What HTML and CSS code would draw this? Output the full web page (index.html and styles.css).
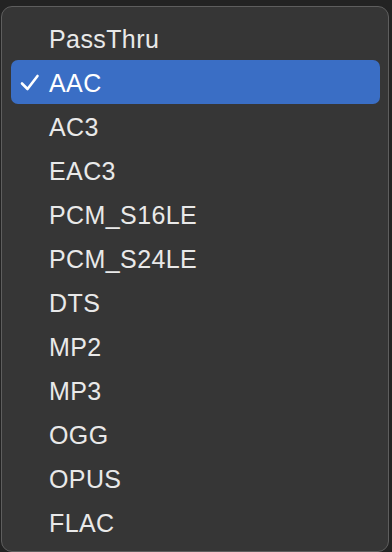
FILE: index.html
```html
<!DOCTYPE html>
<html>
<head>
<meta charset="utf-8">
<link rel="stylesheet" href="styles.css">
</head>
<body>
<div class="menu">
  <div class="item">PassThru</div>
  <div class="item selected">
    <svg class="check" width="20" height="18" viewBox="0 0 20 18"><polyline points="2,9.5 7.5,15 17.5,2" fill="none" stroke="#ffffff" stroke-width="2.6" stroke-linecap="round" stroke-linejoin="round"/></svg>
    AAC
  </div>
  <div class="item">AC3</div>
  <div class="item">EAC3</div>
  <div class="item">PCM_S16LE</div>
  <div class="item">PCM_S24LE</div>
  <div class="item">DTS</div>
  <div class="item">MP2</div>
  <div class="item">MP3</div>
  <div class="item">OGG</div>
  <div class="item">OPUS</div>
  <div class="item">FLAC</div>
</div>
</body>
</html>
```
FILE: styles.css
```css
html, body {
  margin: 0;
  padding: 0;
  background: #232323;
  width: 392px;
  height: 552px;
  overflow: hidden;
}
.menu {
  box-sizing: border-box;
  margin: 6px 0 0 1px;
  width: 388px;
  height: 546px;
  background: #363636;
  border: 1px solid #5e5e5e;
  border-radius: 11px;
  padding: 9px 8px 0 9px;
  display: flex;
  flex-direction: column;
  font-family: "Liberation Sans", Arial, sans-serif;
  font-size: 25px;
  color: #e9e9e9;
}
.item {
  position: relative;
  height: 44px;
  flex: none;
  display: flex;
  align-items: center;
  padding-left: 38px;
  padding-top: 3px;
  border-radius: 7px;
  box-sizing: border-box;
  letter-spacing: 0.4px;
}
.item.selected {
  background: #3a6ec5;
  color: #ffffff;
}
.check {
  position: absolute;
  left: 9px;
  top: 14px;
}
```
